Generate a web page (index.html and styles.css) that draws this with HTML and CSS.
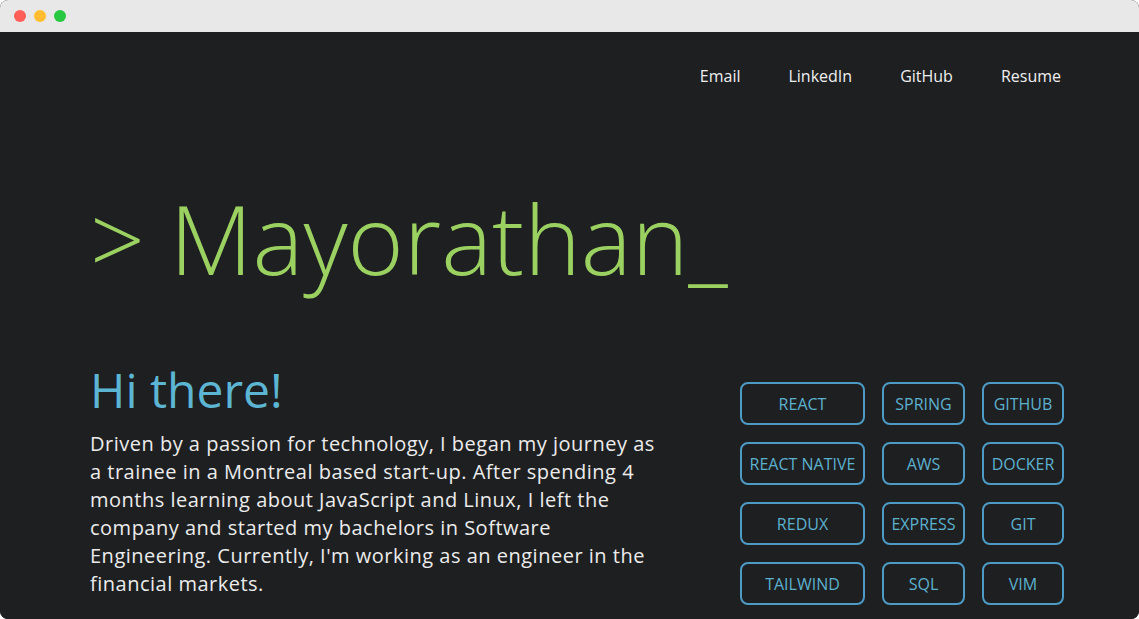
FILE: index.html
```html
<!DOCTYPE html>
<html lang="en">
<head>
<meta charset="utf-8">
<title>Mayorathan</title>
<link rel="stylesheet" href="styles.css">
</head>
<body>
<div class="window">
  <div class="titlebar">
    <span class="light red"></span>
    <span class="light yellow"></span>
    <span class="light green"></span>
  </div>
  <main class="page">
    <nav class="nav">
      <a href="#">Email</a>
      <a href="#">LinkedIn</a>
      <a href="#">GitHub</a>
      <a href="#">Resume</a>
    </nav>
    <h1 class="title">&gt; Mayorathan_</h1>
    <section class="about">
      <div class="intro">
        <h2 class="greeting">Hi there!</h2>
        <p class="bio">Driven by a passion for technology, I began my journey as a trainee in a Montreal based start-up. After spending 4 months learning about JavaScript and Linux, I left the company and started my bachelors in Software Engineering. Currently, I'm working as an engineer in the financial markets.</p>
      </div>
      <ul class="tags">
        <li>React</li>
        <li>Spring</li>
        <li>GitHub</li>
        <li>React Native</li>
        <li>AWS</li>
        <li>Docker</li>
        <li>Redux</li>
        <li>Express</li>
        <li>Git</li>
        <li>Tailwind</li>
        <li>SQL</li>
        <li>Vim</li>
      </ul>
    </section>
  </main>
</div>
</body>
</html>
```

FILE: styles.css
```css
* { box-sizing: border-box; }
html, body { margin: 0; padding: 0; background: #ffffff; }
body { font-family: "Open Sans", "Noto Sans", sans-serif; }

.window {
  width: 1139px;
  height: 619px;
  border-radius: 8px;
  overflow: hidden;
  display: flex;
  flex-direction: column;
  background: #1e1f21;
}

.titlebar {
  height: 32px;
  flex: none;
  background: #e8e8e8;
  display: flex;
  align-items: center;
  gap: 8px;
  padding-left: 14px;
}
.light { width: 12px; height: 12px; border-radius: 50%; }
.red { background: #ff5f57; }
.yellow { background: #febc2e; }
.green { background: #28c840; }

.page {
  flex: 1;
  background: #1e1f21;
  padding: 32px 75px 0 90px;
  overflow: hidden;
}

.nav {
  display: flex;
  justify-content: flex-end;
  gap: 48px;
  padding-right: 3px;
}
.nav a {
  color: #f0f0f0;
  text-decoration: none;
  font-size: 16px;
  line-height: 24px;
}

.title {
  margin: 84px 0 0 0;
  font-size: 96px;
  font-weight: 300;
  line-height: normal;
  color: #9bd161;
  letter-spacing: 0;
}

.about {
  display: flex;
  justify-content: space-between;
  align-items: flex-start;
  margin-top: 54px;
}

.intro { width: 575px; }

.greeting {
  margin: 0;
  font-size: 48px;
  font-weight: 400;
  line-height: normal;
  color: #5bb5d3;
}

.bio {
  margin: 8px 0 0 0;
  font-size: 20px;
  line-height: 28px;
  color: #ececec;
  letter-spacing: 0.5px;
}

.tags {
  list-style: none;
  margin: 25px 0 0 0;
  padding: 0;
  display: grid;
  grid-template-columns: 125px 83px 82px;
  column-gap: 17px;
  row-gap: 17px;
}
.tags li {
  height: 43px;
  border: 2px solid #4d9ac4;
  border-radius: 8px;
  display: flex;
  align-items: center;
  justify-content: center;
  color: #5cb1cf;
  font-size: 16px;
  text-transform: uppercase;
  white-space: nowrap;
}
```
